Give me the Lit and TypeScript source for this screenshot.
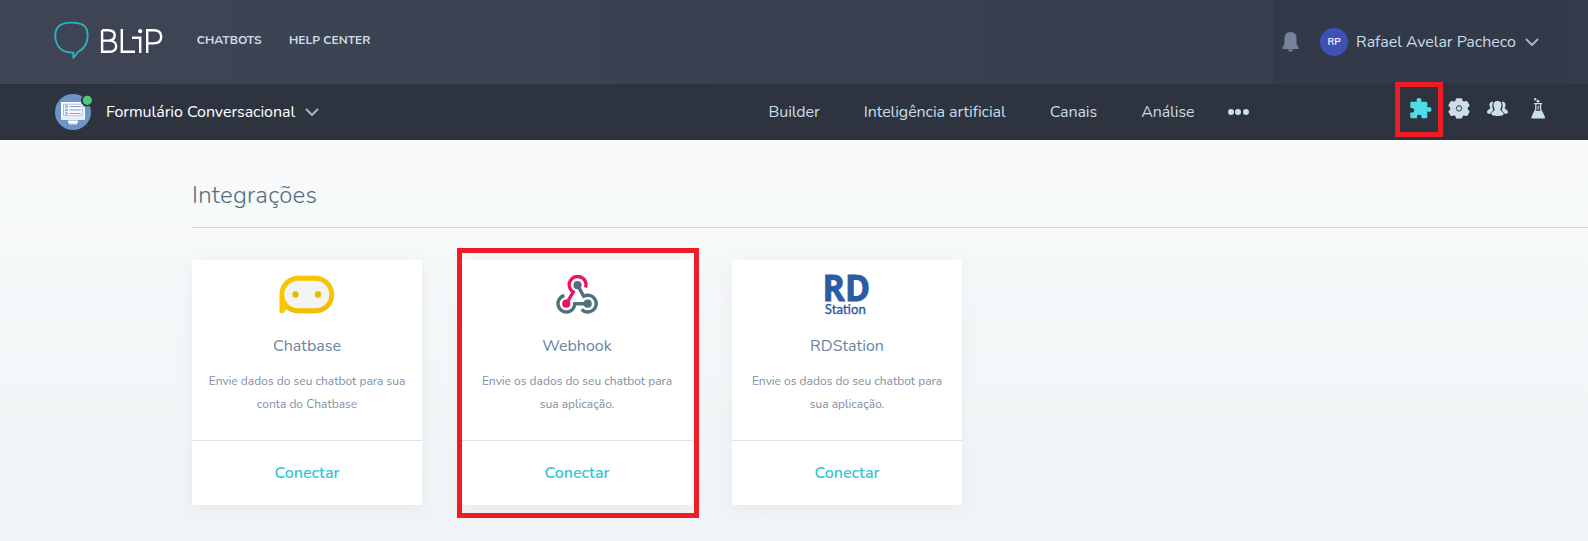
import { LitElement, html, css, nothing } from "lit";
import { customElement, property } from "lit/decorators.js";

const chevron = html`<svg width="14" height="9" viewBox="0 0 14 9"><path d="M1.5 1.500 7 7 12.500 1.500" fill="none" stroke="#a5b5c9" stroke-width="2" stroke-linecap="round" stroke-linejoin="round"/></svg>`;

const blipMark = html`<svg width="36" height="40" viewBox="0 0 36 40">
  <path d="M17.700 1.600C28.500 1.600 33.700 5 33.700 14.500 33.700 24.500 28.500 28.600 24 31L19.400 37V31.600C7.500 31.600 1.300 25 1.300 14.500 1.300 5 7.500 1.600 17.700 1.600Z" fill="none" stroke="#2cb3c2" stroke-width="1.900" stroke-linejoin="round"/>
</svg>`;

const blipWord = html`<svg width="66" height="30" viewBox="0 0 66 30" fill="none" stroke="#fff" stroke-width="2.400">
  <path d="M2.100 2.200V23.800H8.500C13.500 23.800 16.200 21.800 16.200 18.200 16.200 14.800 13.500 12.600 9 12.600H2.100M2.100 2.200H8C12.200 2.200 14.700 4 14.700 7.300 14.700 10.800 12 12.600 8.500 12.600"/>
  <path d="M21.800 1.100V23.800H35"/>
  <path d="M32 9.700H40.200V25"/>
  <path d="M47.200 25V2.200H53.500C58.800 2.200 61.200 4.700 61.200 8.800 61.200 13 58.500 15.400 53.500 15.400H47.200"/>
  <circle cx="40.200" cy="3.200" r="2.100" fill="#fff" stroke="none"/>
</svg>`;

const botAvatar = html`<svg width="38" height="38" viewBox="0 0 38 38">
  <circle cx="18" cy="19" r="18" fill="#6c94c7"/>
  <circle cx="32.300" cy="7.300" r="6.300" fill="#2d3440"/><circle cx="32.300" cy="7.300" r="4.600" fill="#4ec97b"/>
  <path d="M6 9H26V12.500L30 14V27H6Z" fill="#fff"/>
  <rect x="6" y="24" width="24" height="3" fill="#e4edf7"/>
  <rect x="13" y="27.500" width="10" height="2.500" fill="#fff"/><rect x="14" y="30" width="8" height="1.500" fill="#d7e3f2"/>
  <path d="M8.500 11.200H27.800V22.800H8.500Z" fill="#f7faff" stroke="#8eabd3" stroke-width=".8"/>
  <path d="M14.500 13.500H26M14.500 17H26M14.500 20.500H26" stroke="#7f9fcc" stroke-width="1"/>
  <path d="M10.500 12.600h1.800v1.800h-1.800zM10.500 16.100h1.800v1.800h-1.800zM10.500 19.600h1.800v1.800h-1.800z" fill="none" stroke="#7f9fcc" stroke-width=".9"/>
</svg>`;

const bell = html`<svg width="17" height="20" viewBox="0 0 17 20"><path d="M8.500 0C12.500 0 14.500 2.800 14.500 6.500V12L16.500 15.200V17H.5V15.200L2.500 12V6.500C2.500 2.800 4.500 0 8.500 0ZM5.700 17.500H11.300C10.700 19 9.700 19.500 8.500 19.500S6.300 19 5.700 17.500Z" fill="#78839a"/></svg>`;

const puzzle = html`<svg width="22" height="21" viewBox="0 0 22 21"><path d="M1.500 3.700H6.500C7 3.700 7 3.300 6.700 2.900 5.900 1.500 7.200 0 9 0S12 1.500 11.300 2.900C11 3.400 11 3.700 11.500 3.700H16Q17.300 3.700 17.300 5V9C17.300 9.500 17.700 9.500 18.100 9.200 19.700 8.300 21.500 9.500 21.500 11.400S19.700 14.500 18.100 13.600C17.700 13.300 17.300 13.400 17.300 13.900V19Q17.300 20.300 16 20.300H12C11.500 20.300 11.400 19.900 11.600 19.400 12.100 18 11 16.700 9.300 16.700S6.500 18 7 19.400C7.200 19.900 7 20.300 6.500 20.300H1.500Q.3 20.300 .3 19V15C.3 14.500 .7 14.400 1.200 14.600 2.800 15.100 4.200 14 4.200 12.300S2.800 9.500 1.200 10C.7 10.200 .3 10.100 .3 9.600V5Q.3 3.700 1.500 3.700Z" fill="#50dbe6"/></svg>`;

const gear = html`<svg width="22" height="21" viewBox="0 0 22 21"><path d="M7.900 .8Q8.100 .2 8.800 .2H13.200Q13.900 .2 14.100 .8L14.600 2.700 15.800 3.400 18.300 2.900Q19.100 2.800 19.500 3.400L21.500 7Q21.800 7.600 21.300 8.100L19.700 9.700V11.300L21.300 12.900Q21.800 13.400 21.500 14L19.500 17.500Q19.100 18.100 18.300 18L15.800 17.400 14.600 18.100 14.100 20Q13.900 20.600 13.200 20.600H8.800Q8.100 20.600 7.900 20L7.400 18.100 6.200 17.400 3.700 18Q2.900 18.100 2.500 17.500L.5 14Q.2 13.400 .7 12.900L2.300 11.300V9.700L.7 8.100Q.2 7.600 .5 7L2.500 3.400Q2.900 2.800 3.700 2.900L6.200 3.400 7.400 2.700Z" fill="#cbdfe6"/><circle cx="11" cy="10.400" r="2.700" fill="#c4d8e0" stroke="#3a4450" stroke-width="1"/></svg>`;

const users = html`<svg width="21" height="15" viewBox="0 0 21 15" fill="#cbdfe6">
  <path d="M6.300 .9C4 .3 2.300 1.800 2.500 4.300 2.600 5.800 3.400 6.400 3.200 7.200 2.800 8.400 0 8.500 0 11.300 0 12.500 1.500 13 3.200 13 3.700 10.700 6 10.200 6.300 8.900 5.300 7 4.700 3.500 6.300 .9Z"/>
  <path d="M14.700 .9C17 .3 18.700 1.800 18.500 4.300 18.400 5.800 17.600 6.400 17.800 7.200 18.200 8.400 21 8.500 21 11.300 21 12.500 19.500 13 17.800 13 17.300 10.700 15 10.200 14.700 8.900 15.700 7 16.300 3.500 14.700 .9Z"/>
  <path d="M10.500 0C13.500 0 14.800 1.800 14.500 4.500 14.300 6.600 13.300 7.500 13.400 8.900 13.600 10.300 16.700 10.200 16.700 13 16.700 14.300 13.500 15 10.500 15S4.300 14.300 4.300 13C4.300 10.200 7.400 10.300 7.600 8.900 7.700 7.500 6.700 6.600 6.500 4.500 6.200 1.800 7.500 0 10.500 0Z"/>
</svg>`;

const flask = html`<svg width="15" height="21" viewBox="0 0 15 21"><circle cx="4.200" cy="1.300" r="1.200" fill="#cbdfe6"/><circle cx="7" cy="3.200" r="1.400" fill="#cbdfe6"/><path d="M3.200 5.700H11.200M4.800 6V11.300L1.300 18.500M9.600 6V11.300L13.100 18.500" fill="none" stroke="#cbdfe6" stroke-width="1.200"/><path d="M6.400 7.800H8.200V11.500H6.400Z" fill="#9db0ba"/><path d="M4.100 12.800H10.300L14 19.200Q14.200 20.500 13 20.500H1.500Q.2 20.500 .5 19.200Z" fill="#cbdfe6"/></svg>`;

const chatbaseLogo = html`<svg width="56" height="40" viewBox="0 0 56 40">
  <path d="M19 .8H36.500A18.700 18.700 0 0 1 36.500 38.200H19C14 38.200 10 36.500 7.500 34.300L4.600 37.500C3 39 .5 38.500 .5 36V19.500A18.600 18.600 0 0 1 19 .8Z" fill="#f7c600"/>
  <path d="M6 29.500C9 35 13 38.200 19 38.200H36.500C46 38.200 52.500 32 54.500 24L48 28 36 33H19C12 33 9 31 6 29.500Z" fill="#f0bf02"/>
  <rect x="5.300" y="5.800" width="45" height="27.400" rx="13.700" fill="#f4f4f5"/>
  <circle cx="16.500" cy="19.500" r="3.200" fill="#e9b908"/><circle cx="39" cy="19.500" r="3.200" fill="#e9b908"/>
</svg>`;

const webhookLogo = html`<svg width="42" height="40" viewBox="0 0 42 40" fill="none" stroke-width="3.400">
  <path d="M8.400 20.500A8.400 8.400 0 1 0 18.800 28.700H31.500" stroke="#50707c"/>
  <path d="M21.500 10.200 27.700 21.300A8.400 8.400 0 1 1 25.600 34.300" stroke="#50707c"/>
  <path d="M29.600 12.500A8.400 8.400 0 1 0 17.200 17L10.500 28.500" stroke="#ec1561"/>
  <circle cx="10.300" cy="28.700" r="4.100" fill="#ec1561"/><circle cx="21.500" cy="10.200" r="4.100" fill="#50707c"/><circle cx="31.700" cy="28.700" r="4.100" fill="#50707c"/>
</svg>`;

const rdLogo = html`<svg class="rd" width="46" height="42" viewBox="0 0 46 42" overflow="visible" fill="#2c5aa4">
  <text x="-1.500" y="26" font-family="'Open Sans','Noto Sans',sans-serif" font-size="36" font-weight="700" stroke="#2c5aa4" stroke-width=".9" textLength="47.500" lengthAdjust="spacingAndGlyphs">RD</text>
  <text x="0.800" y="39" font-family="Lato,sans-serif" font-size="14" font-weight="400" stroke="#2c5aa4" stroke-width=".35" textLength="41" lengthAdjust="spacingAndGlyphs">Station</text>
</svg>`;

@customElement("integration-card")
export class IntegrationCard extends LitElement {
  @property() name = "";
  @property({ attribute: false }) lines: string[] = [];
  @property({ attribute: false }) logo: unknown;
  static styles = css`
    :host { display: flex; flex-direction: column; position: relative; width: 230px; height: 245px; background: #fff; border-radius: 2px; box-shadow: 0 4px 16px rgba(80, 100, 110, 0.08); text-align: center; }
    .logo { height: 42px; margin-top: 15px; display: flex; justify-content: center; align-items: flex-start; }
    .name { margin-top: 17px; font-size: 16px; line-height: 24px; color: #6a84a4; }
    .text { margin-top: 12px; font-size: 12px; line-height: 23px; color: #7f8ea3; flex: 1; white-space: nowrap; }
    .action { height: 64px; border-top: 1px solid #d6e4e9; font-size: 16px; font-weight: 600; line-height: 64px; color: #34c6d8; }
  `;
  render() {
    return html`<div class="logo">${this.logo}</div>
      <div class="name">${this.name}</div>
      <div class="text">${this.lines.map((l) => html`<div>${l}</div>`)}</div>
      <div class="action">Conectar</div>
      <slot></slot>`;
  }
}

const integrations = [
  { name: "Chatbase", lines: ["Envie dados do seu chatbot para sua", "conta do Chatbase"], logo: chatbaseLogo },
  { name: "Webhook", lines: ["Envie os dados do seu chatbot para", "sua aplicação."], logo: webhookLogo, marked: true },
  { name: "RDStation", lines: ["Envie os dados do seu chatbot para", "sua aplicação."], logo: rdLogo },
];

@customElement("app-root")
export class AppRoot extends LitElement {
  static styles = css`
    :host { display: flex; flex-direction: column; height: 541px; overflow: hidden; font-family: Nunito, Lato, sans-serif; font-size: 16px; background: linear-gradient(#f8fafb 140px, #f0f4f6); }
    svg { display: block; flex: none; }
    .top { display: flex; height: 84px; background: linear-gradient(90deg, #3f4555, #343b4b); }
    .brand { display: flex; padding: 21px 0 0 54px; gap: 10px; }
    .word { margin-top: 6.500px; }
    .links { display: flex; gap: 27.500px; padding: 31px 0 0 30.800px; font-size: 12px; line-height: 18px; font-weight: 700; color: #c9dde6; }
    .user { display: flex; align-items: center; margin-left: auto; width: 296px; padding-left: 8px; background: #323949; box-sizing: border-box; color: #c9dde6; }
    .rp { display: flex; align-items: center; justify-content: center; width: 28px; height: 28px; margin: 0 8px 0 21px; border-radius: 50%; background: #3f51b5; color: #fff; font-size: 10px; font-weight: 600; }
    .user span { letter-spacing: -0.04px; }
    .user .drop { margin-left: 9px; }
    .edge { width: 18px; background: #343b4a; }
    .sub { display: flex; align-items: center; height: 56px; background: #2d3440; color: #c9dde6; }
    .bot { display: flex; align-items: center; width: 700px; padding-left: 55px; color: #fff; }
    .bot span { margin: 0 10px 0 13px; letter-spacing: -0.05px; }
    .nav { display: flex; align-items: center; gap: 44px; padding-left: 13.500px; letter-spacing: -0.08px; }
    .dots { display: flex; gap: 1.500px; margin-left: -10.500px; }
    .dots i { width: 6px; height: 6px; border-radius: 50%; background: #c9dde6; }
    .tools { display: flex; align-items: center; margin-left: auto; padding: 0 42px 8px 0; }
    .puzzle { position: relative; }
    .mark { position: absolute; box-sizing: border-box; border: 5px solid #ee1c25; }
    .puzzle .mark { left: -15px; top: -16px; width: 48px; height: 55px; }
    .cardmark { left: -5px; top: -12px; width: 242px; height: 270px; }
    .g1 { margin-left: 16px; }
    .g2 { margin-left: 17px; }
    .g3 { margin-left: 23px; }
    .page { padding-left: 192px; }
    h1 { margin: 0; padding: 38px 0 15px; font-size: 24px; line-height: 34px; font-weight: 300; letter-spacing: 0.25px; color: #546d7d; border-bottom: 1px solid #c5dee3; }
    .cards { display: flex; gap: 40px; padding-top: 32px; }
  `;
  render() {
    return html`
      <header class="top">
        <div class="brand">${blipMark}<div class="word">${blipWord}</div></div>
        <nav class="links"><span>CHATBOTS</span><span>HELP CENTER</span></nav>
        <div class="user">${bell}<div class="rp">RP</div><span>Rafael Avelar Pacheco</span><div class="drop">${chevron}</div></div>
        <div class="edge"></div>
      </header>
      <div class="sub">
        <div class="bot">${botAvatar}<span>Formulário Conversacional</span>${chevron}</div>
        <nav class="nav">
          ${["Builder", "Inteligência artificial", "Canais", "Análise"].map((t) => html`<span>${t}</span>`)}
          <div class="dots"><i></i><i></i><i></i></div>
        </nav>
        <div class="tools">
          <div class="puzzle">${puzzle}<div class="mark"></div></div>
          <div class="g1">${gear}</div><div class="g2">${users}</div><div class="g3">${flask}</div>
        </div>
      </div>
      <main class="page">
        <h1>Integrações</h1>
        <div class="cards">
          ${integrations.map((c) => html`<integration-card .name=${c.name} .lines=${c.lines} .logo=${c.logo}>${c.marked ? html`<div class="mark cardmark"></div>` : nothing}</integration-card>`)}
        </div>
      </main>`;
  }
}
